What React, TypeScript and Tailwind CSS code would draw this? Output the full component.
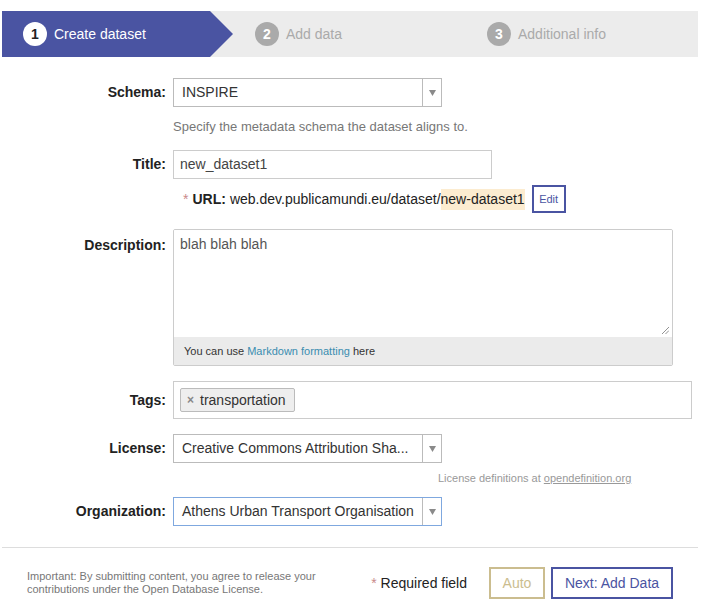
import React from 'react';

const Caret = () => (
  <svg className="h-[6px] w-[7px]" viewBox="0 0 7 6" fill="#8a8a8a">
    <path d="M0 0h7L3.5 6z" />
  </svg>
);

const Select = (props: any) => {
  return (
    <div
      className={
        'flex h-[29px] w-[269px] items-stretch border bg-white ' +
        (props.focused ? 'border-[#7fa8df]' : 'border-[#bbbbbb]')
      }
    >
      <div className="flex flex-1 items-center overflow-hidden whitespace-nowrap pl-[8px] pr-[6px] text-[14px] text-[#333]">
        {props.value}
      </div>
      <div className="flex w-[19px] items-center justify-center border-l border-[#bbbbbb]">
        <Caret />
      </div>
    </div>
  );
};

const Row = (props: any) => {
  return (
    <div className={'flex ' + (props.top ? 'items-start' : 'items-center') + ' ' + props.className}>
      <div
        className={
          'w-[164px] text-right text-[14px] font-bold text-[#222] ' + (props.top ? 'pt-[6px]' : '')
        }
      >
        {props.label}
      </div>
      <div className="ml-[7px] flex-1">{props.children}</div>
    </div>
  );
};

const Steps = () => {
  const steps = [
    { n: '1', title: 'Create dataset' },
    { n: '2', title: 'Add data' },
    { n: '3', title: 'Additional info' },
  ];
  return (
    <div className="mt-[11px] flex h-[46px] bg-[#ececec]">
      {steps.map((step, i) => {
        const active = i === 0;
        return (
          <div
            key={step.n}
            className={
              'flex w-[232px] items-center pl-[21px] ' +
              (active ? 'bg-[#4a54a2] [clip-path:polygon(0_0,208px_0,231px_50%,208px_100%,0_100%)]' : '')
            }
          >
            <span
              className={
                'flex h-[24px] w-[24px] items-center justify-center rounded-full text-[14px] font-bold ' +
                (active ? 'bg-white text-[#222]' : 'bg-[#aaaaaa] text-white')
              }
            >
              {step.n}
            </span>
            <span className={'ml-[7px] text-[14px] ' + (active ? 'text-white' : 'text-[#aaaaaa]')}>
              {step.title}
            </span>
          </div>
        );
      })}
    </div>
  );
};

export default function App() {
  return (
    <div className="min-h-[615px] bg-white [font-family:'Liberation_Sans',Arial,sans-serif]">
      <div className="mx-[2px] w-[696px]">
        <Steps />

        <Row label="Schema:" className="mt-[21px]">
          <Select value="INSPIRE" />
        </Row>
        <div className="ml-[171px] mt-[11px] text-[13px] leading-[18px] text-[#777]">
          Specify the metadata schema the dataset aligns to.
        </div>

        <Row label="Title:" className="mt-[14px]">
          <div className="flex h-[29px] w-[319px] items-center border border-[#cccccc] px-[6px] text-[14px] text-[#444]">
            new_dataset1
          </div>
        </Row>

        <div className="ml-[181px] mt-[6px] flex h-[28px] items-center text-[14px] text-[#222]">
          <span className="mr-[4px] text-[#c98a8a]">*</span>
          <span className="font-bold">URL:</span>
          <span className="ml-[4px]">web.dev.publicamundi.eu/dataset/</span>
          <span className="bg-[#fcecd0]">new-dataset1</span>
          <button className="ml-[7px] flex h-[28px] w-[34px] items-center justify-center border-2 border-[#4a54a2] bg-white text-[11px] text-[#4a54a2]">
            Edit
          </button>
        </div>

        <Row label="Description:" className="mt-[16px]" top>
          <div className="w-[500px] overflow-hidden rounded-[2px] border border-[#cccccc]">
            <div className="relative h-[107px] bg-white px-[6px] pt-[5px] text-[14px] leading-[18px] text-[#555]">
              blah blah blah
              <svg className="absolute bottom-[3px] right-[3px] h-[7px] w-[7px]" viewBox="0 0 7 7" stroke="#777" strokeWidth="0.8">
                <path d="M7 0L0 7M7 3.5L3.5 7" />
              </svg>
            </div>
            <div className="flex h-[28px] items-center bg-[#ebebeb] px-[10px] text-[11px] text-[#333]">
              You can use&nbsp;<span className="text-[#3a8db0]">Markdown formatting</span>&nbsp;here
            </div>
          </div>
        </Row>

        <Row label="Tags:" className="mt-[15px]">
          <div className="flex h-[38px] w-[519px] items-center border border-[#cccccc] px-[6px]">
            <div className="flex h-[24px] items-center rounded-[2px] border border-[#bbbbbb] bg-[#eeeeee] pl-[6px] pr-[8px] text-[14px] text-[#333]">
              <span className="mr-[6px] text-[12px] font-bold text-[#888]">×</span>
              transportation
            </div>
          </div>
        </Row>

        <Row label="License:" className="mt-[15px]">
          <Select value="Creative Commons Attribution Sha..." />
        </Row>
        <div className="ml-[436px] mt-[7px] text-[11px] leading-[16px] text-[#999]">
          License definitions at <span className="underline">opendefinition.org</span>
        </div>

        <Row label="Organization:" className="mt-[11px]">
          <Select value="Athens Urban Transport Organisation" focused />
        </Row>

        <div className="mt-[21px] h-[1px] bg-[#dddddd]" />

        <div className="mt-[19px] flex h-[32px] items-center justify-between px-[25px]">
          <div className="text-[11px] leading-[13px] text-[#777]">
            Important: By submitting content, you agree to release your
            <br />
            contributions under the Open Database License.
          </div>
          <div className="flex items-center">
            <span className="mr-[4px] text-[14px] text-[#c98a8a]">*</span>
            <span className="text-[14px] text-[#222]">Required field</span>
            <button className="ml-[22px] h-[32px] w-[56px] border-2 border-[#cbbd8f] bg-white text-[14px] text-[#cbbd8f]">
              Auto
            </button>
            <button className="ml-[6px] h-[32px] w-[122px] border-2 border-[#4a54a2] bg-white text-[14px] text-[#4a54a2]">
              Next: Add Data
            </button>
          </div>
        </div>
      </div>
    </div>
  );
}
